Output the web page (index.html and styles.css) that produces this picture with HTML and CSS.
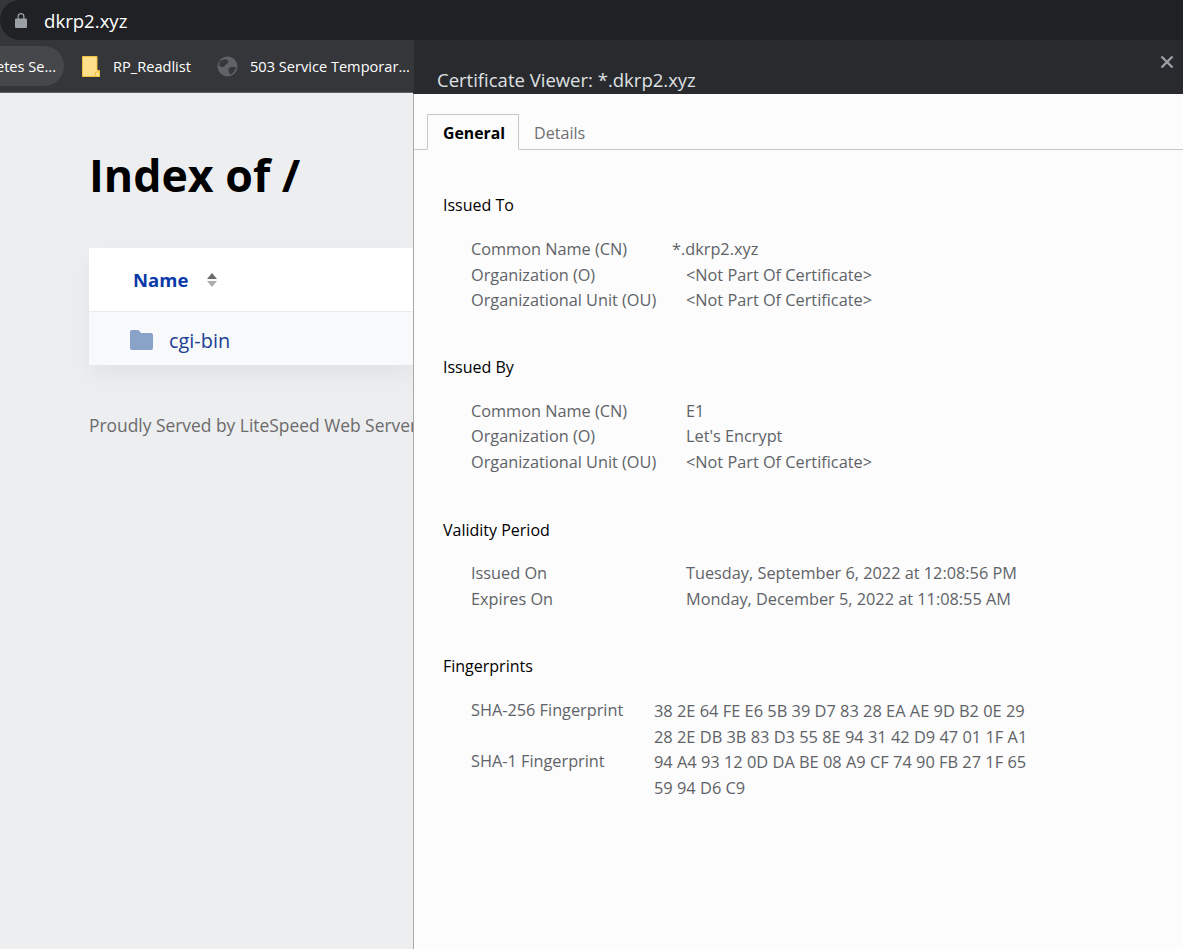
FILE: index.html
```html
<!DOCTYPE html>
<html lang="en">
<head>
<meta charset="utf-8">
<title>Certificate Viewer</title>
<link rel="stylesheet" href="styles.css">
</head>
<body>
<header class="address-bar">
  <div class="address-pill">
    <svg class="lock" width="12" height="15" viewBox="0 0 12 15"><path fill="#9aa0a6" d="M1 5.500h10a1 1 0 0 1 1 1V14a1 1 0 0 1-1 1H1a1 1 0 0 1-1-1V6.500a1 1 0 0 1 1-1zM2.500 5.500V3.500a3.500 3.500 0 0 1 7 0v2H8.200V3.500a2.200 2.200 0 0 0-4.400 0v2z"/></svg>
    <span class="url">dkrp2.xyz</span>
  </div>
</header>
<div class="workspace">
  <div class="browser-side">
    <nav class="bookmarks">
      <div class="bm-chip"><span class="bm-chip-text">etes Se...</span></div>
      <div class="bm bm-note">
        <svg width="18" height="21" viewBox="0 0 18 21"><path fill="#fee08a" stroke="#f2c23e" d="M.5.500h14.500v14l2.500 0v6H.5z"/><path fill="#fee08a" stroke="#f2c23e" d="M13.500 20.500v-4.500h4v4.500z"/></svg>
        <span>RP_Readlist</span>
      </div>
      <div class="bm bm-site">
        <svg width="21" height="21" viewBox="0 0 21 21"><circle cx="10.500" cy="10.500" r="10" fill="#5f6368"/><path fill="#36373b" d="M3.500 4.500c2.500-.5 5.500-1.500 7-.5s1 3-1 4-1.500 3-3.500 3-3.500-.5-4-2.500c.2-1.500.7-3 1.500-4zM12 12c2-1.200 5-1.200 7-.5-.7 3-2.800 5.500-5.500 7-1-.5-2.800-4.700-1.500-6.500z"/></svg>
        <span>503 Service Temporar...</span>
      </div>
    </nav>
    <main class="listing">
      <h1 class="listing-title">Index of /</h1>
      <section class="card">
        <div class="card-head">
          <span class="col-name">Name</span>
          <span class="sort"><i class="sort-up"></i><i class="sort-down"></i></span>
        </div>
        <div class="card-row">
          <svg class="folder" width="23" height="20" viewBox="0 0 23 20"><path fill="#88a3c7" d="M2 0h6.500l2.500 3h10a2 2 0 0 1 2 2v13a2 2 0 0 1-2 2H2a2 2 0 0 1-2-2V2a2 2 0 0 1 2-2z"/></svg>
          <a class="folder-link" href="#">cgi-bin</a>
        </div>
      </section>
      <p class="served">Proudly Served by LiteSpeed Web Server</p>
    </main>
  </div>
  <aside class="viewer">
    <div class="viewer-head">
      <h2 class="viewer-title">Certificate Viewer: *.dkrp2.xyz</h2>
      <svg class="close" width="14" height="14" viewBox="0 0 14 14"><path stroke="#9aa0a6" stroke-width="2.400" d="M1.500 1.500l11 11M12.500 1.500l-11 11"/></svg>
    </div>
    <div class="tabs">
      <span class="tab tab-active">General</span>
      <span class="tab">Details</span>
    </div>
    <div class="viewer-body">
      <section class="group">
        <h3 class="group-title">Issued To</h3>
        <dl class="fields">
          <dt>Common Name (CN)</dt><dd class="dd-wildcard">*.dkrp2.xyz</dd>
          <dt>Organization (O)</dt><dd>&lt;Not Part Of Certificate&gt;</dd>
          <dt>Organizational Unit (OU)</dt><dd>&lt;Not Part Of Certificate&gt;</dd>
        </dl>
      </section>
      <section class="group group-by">
        <h3 class="group-title">Issued By</h3>
        <dl class="fields">
          <dt>Common Name (CN)</dt><dd>E1</dd>
          <dt>Organization (O)</dt><dd>Let's Encrypt</dd>
          <dt>Organizational Unit (OU)</dt><dd>&lt;Not Part Of Certificate&gt;</dd>
        </dl>
      </section>
      <section class="group group-validity">
        <h3 class="group-title">Validity Period</h3>
        <dl class="fields">
          <dt>Issued On</dt><dd>Tuesday, September 6, 2022 at 12:08:56 PM</dd>
          <dt>Expires On</dt><dd>Monday, December 5, 2022 at 11:08:55 AM</dd>
        </dl>
      </section>
      <section class="group">
        <h3 class="group-title">Fingerprints</h3>
        <dl class="fields fields-fp">
          <dt>SHA-256 Fingerprint</dt><dd>38 2E 64 FE E6 5B 39 D7 83 28 EA AE 9D B2 0E 29<br>28 2E DB 3B 83 D3 55 8E 94 31 42 D9 47 01 1F A1</dd>
          <dt>SHA-1 Fingerprint</dt><dd>94 A4 93 12 0D DA BE 08 A9 CF 74 90 FB 27 1F 65<br>59 94 D6 C9</dd>
        </dl>
      </section>
    </div>
  </aside>
</div>
</body>
</html>
```

FILE: styles.css
```css
* { box-sizing: border-box; }
html, body { margin: 0; height: 100%; }
body {
  width: 1183px;
  height: 949px;
  overflow: hidden;
  display: flex;
  flex-direction: column;
  font-family: "Open Sans", "Noto Sans", sans-serif;
  background: #edeef0;
}
.address-bar { height: 40px; background: #35363a; flex: none; }
.address-pill {
  height: 40px;
  background: #202124;
  border-radius: 20px 0 0 20px;
  display: flex;
  align-items: center;
  padding-left: 15px;
  gap: 17px;
}
.url { color: #fff; font-size: 18.600px; }
.workspace { flex: 1; display: flex; min-height: 0; }
.browser-side { width: 414px; flex: none; overflow: hidden; display: flex; flex-direction: column; }
.bookmarks {
  height: 53px;
  flex: none;
  background: #35363a;
  border-bottom: 1px solid #5f6164;
  display: flex;
  align-items: center;
  white-space: nowrap;
  color: #fff;
  font-size: 14.600px;
}
.bm-chip {
  width: 64px;
  height: 40px;
  flex: none;
  background: #46474b;
  border-radius: 0 20px 20px 0;
  display: flex;
  align-items: center;
  justify-content: flex-end;
  padding-right: 8px;
  overflow: hidden;
}
.bm-chip-text { flex: none; }
.bm { display: flex; align-items: center; flex: none; }
.bm-note { margin-left: 18px; gap: 13px; }
.bm-site { margin-left: 26px; gap: 12px; }
.listing { padding: 52px 0 0 89px; width: 500px; }
.listing-title {
  margin: 0 0 43px;
  font-size: 44.700px;
  line-height: 60px;
  font-weight: 700;
  color: #000;
}
.card { width: 325px; box-shadow: 0 10px 24px rgba(0,0,0,.05); }
.card-head {
  height: 64px;
  background: #fff;
  border-bottom: 1px solid #e8ebf0;
  display: flex;
  align-items: center;
  padding-left: 44px;
  gap: 19px;
}
.col-name { color: #0b3aa8; font-weight: 700; font-size: 18.500px; }
.sort { display: flex; flex-direction: column; gap: 2px; }
.sort-up, .sort-down { display: block; width: 0; height: 0; border-left: 5.500px solid transparent; border-right: 5.500px solid transparent; }
.sort-up { border-bottom: 6px solid #6b6b6b; }
.sort-down { border-top: 6px solid #adadad; }
.card-row {
  height: 53px;
  background: #f7f9fb;
  display: flex;
  align-items: center;
  padding: 3px 0 0 41px;
  gap: 16px;
}
.folder-link { color: #1d3f94; font-size: 19.900px; text-decoration: none; }
.served { margin: 47px 0 0; color: #6b6b6b; font-size: 17.400px; line-height: 26px; white-space: nowrap; }
.viewer {
  width: 769px;
  flex: none;
  background: #fcfcfc;
  box-shadow: -1px 0 0 #a8a8a8;
  position: relative;
  display: flex;
  flex-direction: column;
}
.viewer-head {
  height: 54px;
  flex: none;
  background: #292a2e;
  box-shadow: -1px 0 0 #35363a;
  display: flex;
  justify-content: space-between;
  padding: 15px 9px 0 23px;
}
.viewer-title { margin: 12px 0 0; color: #dfe0e2; font-size: 18.500px; line-height: 26px; font-weight: 400; }
.tabs {
  height: 56px;
  flex: none;
  border-bottom: 1px solid #c8c8c8;
  display: flex;
  align-items: flex-end;
  padding-left: 13px;
}
.tab { height: 36px; margin-bottom: -1px; padding: 0 15px; line-height: 38px; font-size: 16.100px; color: #6f6f6f; }
.tab-active { width: 92px; line-height: 36px; color: #000; font-weight: 700; font-size: 15.800px; background: #fcfcfc; border: 1px solid #c8c8c8; border-bottom-color: #fcfcfc; }
.viewer-body { padding: 43px 0 0 29px; }
.group { margin-bottom: 41px; }
.group-by { margin-bottom: 43px; }
.group-validity { margin-bottom: 42px; }
.group-validity .group-title { margin-bottom: 18px; }
.group-title { margin: 0 0 19px; font-size: 16px; line-height: 25px; font-weight: 400; color: #000; }
.fields {
  margin: 0;
  padding-left: 28px;
  display: grid;
  grid-template-columns: 215px 1fr;
  font-size: 16.300px;
  line-height: 25.500px;
  color: #5f6368;
}
.fields dt, .fields dd { margin: 0; white-space: nowrap; }
.fields .dd-wildcard { margin-left: -14px; }
.fields-fp { grid-template-columns: 183px 1fr; }
.fields-fp dd { font-size: 16.400px; }
```
